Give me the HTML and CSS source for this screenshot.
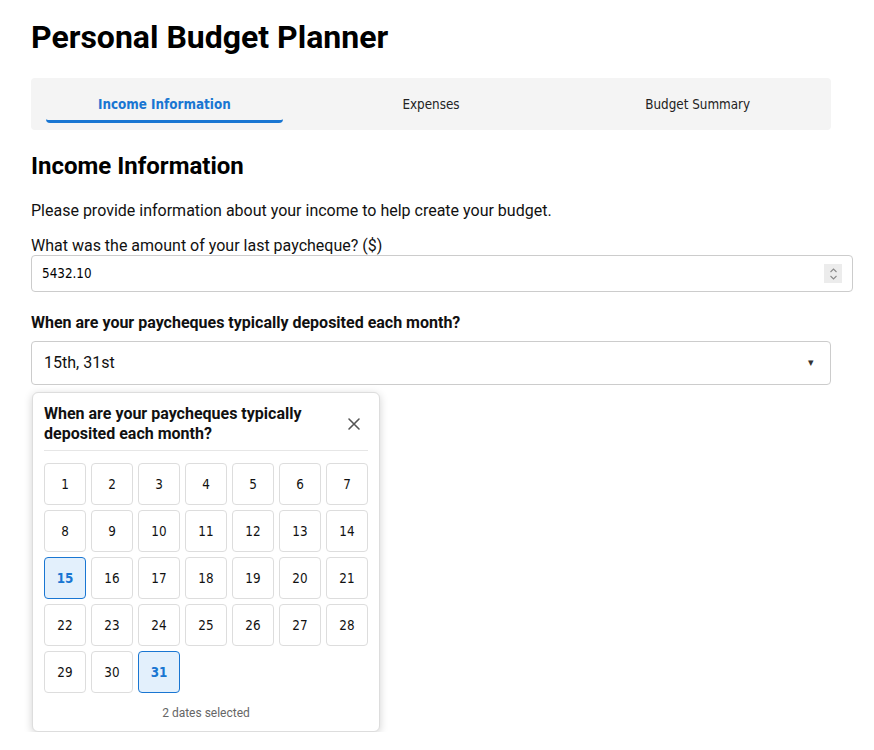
FILE: index.html
```html
<!DOCTYPE html>
<html lang="en">
<head>
<meta charset="utf-8">
<title>Personal Budget Planner</title>
<link rel="stylesheet" href="styles.css">
</head>
<body>
<div class="app">
  <h1 class="title">Personal Budget Planner</h1>
  <nav class="tabs">
    <button class="tab active">Income Information</button>
    <button class="tab">Expenses</button>
    <button class="tab">Budget Summary</button>
  </nav>
  <h2 class="section-title">Income Information</h2>
  <p class="intro">Please provide information about your income to help create your budget.</p>
  <label class="field-label" for="amount">What was the amount of your last paycheque? ($)</label>
  <div class="input-wrap">
    <input id="amount" class="text-input" type="number" value="5432.10">
    <span class="spinner" aria-hidden="true">
      <svg width="9" height="14" viewBox="0 0 9 14"><path d="M1.5 5 L4.5 2 L7.5 5 M1.5 9 L4.5 12 L7.5 9" stroke="#8a8a8a" stroke-width="1.1" fill="none"/></svg>
    </span>
  </div>
  <div class="field-label bold">When are your paycheques typically deposited each month?</div>
  <div class="picker">
    <div class="select">
      <span class="select-value">15th, 31st</span>
      <span class="caret">▾</span>
    </div>
    <section class="day-panel">
      <div class="panel-header">
        <div class="panel-title">When are your paycheques typically deposited each month?</div>
        <button class="close" aria-label="Close">
          <svg width="14" height="14" viewBox="0 0 14 14"><path d="M2 2 L12 12 M12 2 L2 12" stroke="#555" stroke-width="1.6" fill="none" stroke-linecap="round"/></svg>
        </button>
      </div>
      <div class="days">
        <button class="day">1</button><button class="day">2</button><button class="day">3</button><button class="day">4</button><button class="day">5</button><button class="day">6</button><button class="day">7</button>
        <button class="day">8</button><button class="day">9</button><button class="day">10</button><button class="day">11</button><button class="day">12</button><button class="day">13</button><button class="day">14</button>
        <button class="day selected">15</button><button class="day">16</button><button class="day">17</button><button class="day">18</button><button class="day">19</button><button class="day">20</button><button class="day">21</button>
        <button class="day">22</button><button class="day">23</button><button class="day">24</button><button class="day">25</button><button class="day">26</button><button class="day">27</button><button class="day">28</button>
        <button class="day">29</button><button class="day">30</button><button class="day selected">31</button>
      </div>
      <div class="panel-footer">2 dates selected</div>
    </section>
  </div>
</div>
</body>
</html>
```
FILE: styles.css
```css
html, body {
  margin: 0;
  padding: 0;
  background: #fff;
}
body {
  font-family: Roboto, "Liberation Sans", Arial, sans-serif;
  color: #111;
}
button, input {
  font-family: "DejaVu Sans Condensed", "DejaVu Sans", sans-serif;
  font-size: 13.333px;
}
.app {
  width: 800px;
  padding: 0 31px;
}
.title {
  font-size: 32px;
  font-weight: 700;
  margin: 18px 0 22px;
  line-height: normal;
  color: #000;
}
.tabs {
  display: flex;
  background: #f4f4f4;
  border-radius: 4px;
  padding: 7px 0;
}
.tab {
  flex: 1;
  margin: 0 15px;
  background: transparent;
  border: none;
  border-bottom: 3px solid transparent;
  border-radius: 4px;
  padding: 12px 0 8px;
  color: #222;
  cursor: pointer;
}
.tab.active {
  color: #1976d2;
  font-weight: 700;
  border-bottom-color: #1976d2;
}
.section-title {
  font-size: 24px;
  font-weight: 700;
  margin: 22px 0 21px;
  line-height: normal;
  color: #000;
}
.intro {
  font-size: 16px;
  margin: 0 0 16px;
  line-height: normal;
}
.field-label {
  display: block;
  font-size: 16px;
  line-height: normal;
}
.field-label.bold {
  font-weight: 700;
  margin-top: 21px;
  margin-bottom: 9px;
}
.input-wrap {
  position: relative;
  width: 822px;
}
.text-input {
  display: block;
  width: 100%;
  box-sizing: border-box;
  padding: 10px;
  border: 1px solid #ccc;
  border-radius: 4px;
  margin: 0;
  color: #000;
  -moz-appearance: textfield;
}
.text-input::-webkit-inner-spin-button,
.text-input::-webkit-outer-spin-button {
  -webkit-appearance: none;
  margin: 0;
}
.spinner {
  position: absolute;
  right: 11px;
  top: 9px;
  width: 18px;
  height: 19px;
  background: #ececec;
  display: flex;
  align-items: center;
  justify-content: center;
}
.picker {
  display: flex;
  flex-direction: column;
  align-items: flex-start;
  gap: 7px;
}
.select {
  align-self: stretch;
  display: flex;
  align-items: center;
  justify-content: space-between;
  border: 1px solid #ccc;
  border-radius: 4px;
  padding: 11px 16px 11px 12px;
  font-size: 16px;
  line-height: 20px;
}
.caret {
  font-size: 11px;
  color: #333;
}
.day-panel {
  display: block;
  margin-left: 1px;
  width: 324px;
  background: #fff;
  border: 1px solid #ddd;
  border-radius: 6px;
  padding: 11px;
  box-shadow: 0 2px 8px rgba(0, 0, 0, 0.18);
}
.panel-header {
  display: flex;
  align-items: center;
  justify-content: space-between;
  padding-bottom: 6px;
  border-bottom: 1px solid #e6e6e6;
}
.panel-title {
  font-size: 16px;
  font-weight: 700;
  line-height: 20px;
  color: #111;
  flex: 1;
}
.close {
  width: 28px;
  height: 28px;
  margin-left: 8px;
  border: none;
  background: transparent;
  padding: 0;
  display: flex;
  align-items: center;
  justify-content: center;
}
.days {
  display: grid;
  grid-template-columns: repeat(7, 42px);
  grid-auto-rows: 42px;
  gap: 5px;
  margin-top: 12px;
}
.day {
  background: #fff;
  border: 1px solid #ddd;
  border-radius: 4px;
  color: #111;
  padding: 0;
  cursor: pointer;
}
.day.selected {
  background: #e3f0fc;
  border-color: #1976d2;
  color: #1976d2;
  font-weight: 700;
}
.panel-footer {
  margin-top: 13px;
  text-align: center;
  font-size: 12px;
  line-height: 14px;
  color: #666;
}
```
